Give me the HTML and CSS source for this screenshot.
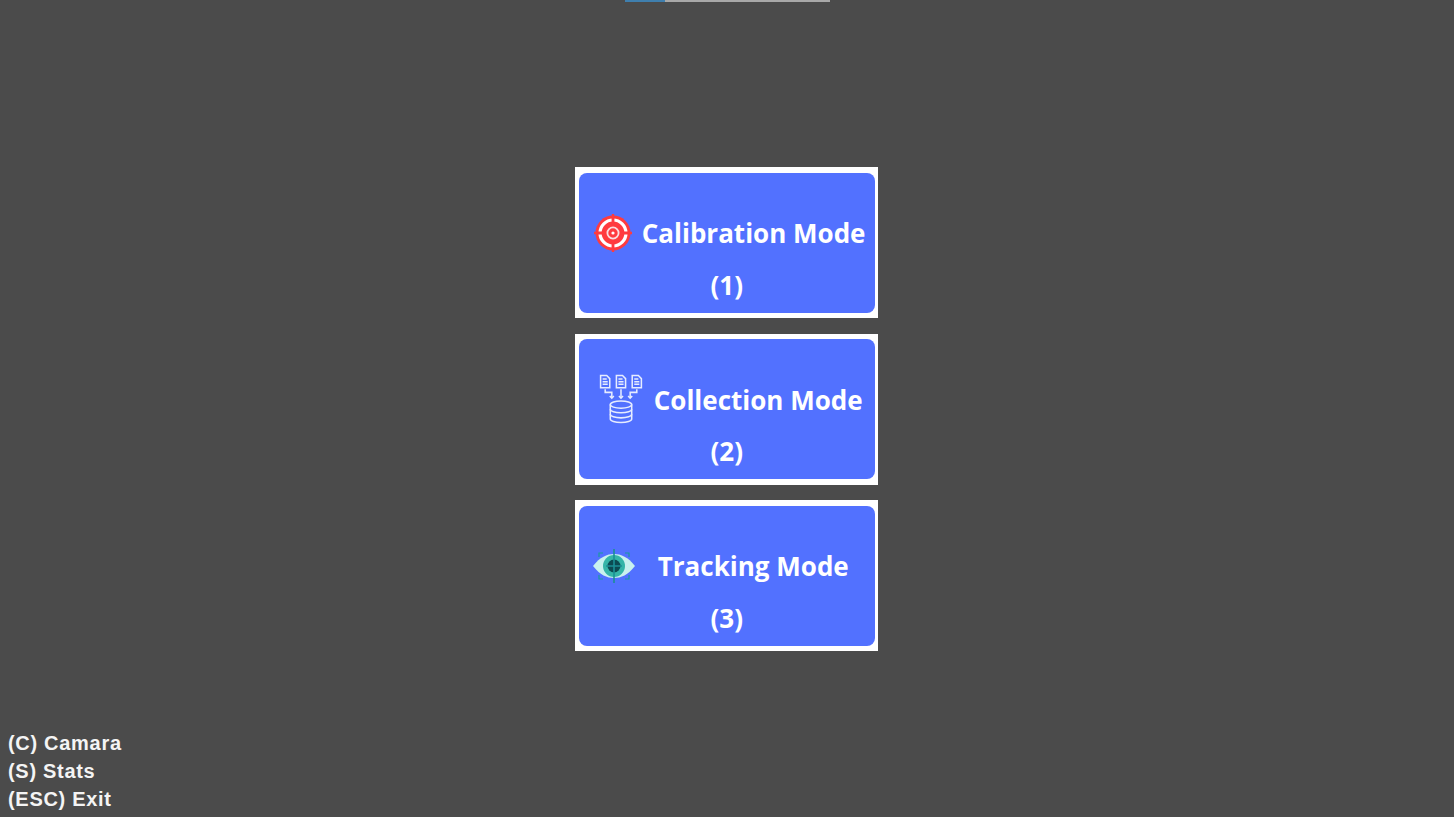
FILE: index.html
```html
<!DOCTYPE html>
<html lang="en">
<head>
<meta charset="UTF-8" />
<meta name="viewport" content="width=device-width, initial-scale=1" />
<title>Mode Menu</title>
<link rel="stylesheet" href="styles.css">
</head>
<body>
  <div class="top-strip">
    <span class="top-strip-blue"></span>
    <span class="top-strip-grey"></span>
  </div>

  <main class="menu">
    <button class="mode-btn mode-calibration">
      <span class="mode-face">
        <span class="mode-row">
          <svg class="mode-icon" viewBox="0 0 40 40" width="40" height="40" aria-hidden="true">
            <circle cx="20" cy="20" r="17.500" fill="#ff3b3f"/>
            <path d="M20 1v38M1 20h38" stroke="#ff3b3f" stroke-width="2.400"/>
            <circle cx="20" cy="20" r="13" fill="none" stroke="#fff" stroke-width="3.200"/>
            <path d="M20 5v8M20 27v8M5 20h8M27 20h8" stroke="#ff3b3f" stroke-width="2.800"/>
            <circle cx="20" cy="20" r="5.600" fill="none" stroke="#fbdde0" stroke-width="1.800"/>
            <circle cx="20" cy="20" r="1.600" fill="#fff"/>
          </svg>
          <span class="mode-label">Calibration Mode</span>
        </span>
        <span class="mode-key">(1)</span>
      </span>
    </button>

    <button class="mode-btn mode-collection">
      <span class="mode-face">
        <span class="mode-row">
          <svg class="mode-icon" viewBox="0 0 46 50" width="47" height="51" aria-hidden="true">
            <g fill="none" stroke="#e6ecff" stroke-width="1.500">
              <path d="M2.500 1.500h6l3 3v9h-9z"/>
              <path d="M18 1.500h6l3 3v9h-9z"/>
              <path d="M33.500 1.500h6l3 3v9h-9z"/>
              <path d="M4.500 5h4M4.500 7.500h5M4.500 10h5M20 5h4M20 7.500h5M20 10h5M35.500 5h4M35.500 7.500h5M35.500 10h5"/>
              <path d="M7 15v3h6.500v5M22.500 15v8M38 15v3h-6.500v5"/>
              <path d="M11.500 21.500l2 2.200 2-2.200M20.500 21.500l2 2.200 2-2.200M29.500 21.500l2 2.200 2-2.200"/>
              <ellipse cx="22.500" cy="30" rx="10.500" ry="3.500"/>
              <path d="M12 30v14c0 2 4.700 3.500 10.500 3.500S33 46 33 44V30"/>
              <path d="M12 34.500c0 2 4.700 3.500 10.500 3.500S33 36.500 33 34.500M12 39.500c0 2 4.700 3.500 10.500 3.500S33 41.500 33 39.500"/>
            </g>
          </svg>
          <span class="mode-label">Collection Mode</span>
        </span>
        <span class="mode-key">(2)</span>
      </span>
    </button>

    <button class="mode-btn mode-tracking">
      <span class="mode-face">
        <span class="mode-row">
          <svg class="mode-icon" viewBox="0 0 44 36" width="44" height="36" aria-hidden="true">
            <path d="M1 18C8 9 15 6 22 6s14 3 21 12c-7 9-14 12-21 12S8 27 1 18z" fill="#c9f1ee"/>
            <circle cx="22" cy="18" r="11" fill="#35b5a8"/>
            <circle cx="22" cy="18" r="6.500" fill="#0c4a52"/>
            <path d="M22 1v34M14 18h16" stroke="#1b8f95" stroke-width="1.600"/>
            <path d="M7 9V5h4M33 5h4v4M7 27v4h4M33 31h4v-4" fill="none" stroke="#1b9aa0" stroke-width="1.200"/>
          </svg>
          <span class="mode-label">Tracking Mode</span>
        </span>
        <span class="mode-key">(3)</span>
      </span>
    </button>
  </main>

  <ul class="shortcuts">
    <li>(C) Camara</li>
    <li>(S) Stats</li>
    <li>(ESC) Exit</li>
  </ul>
</body>
</html>
```

FILE: styles.css
```css
/* Reset & base */
* {
  box-sizing: border-box;
}
html, body {
  height: 100%;
  margin: 0;
}
body {
  position: relative;
  overflow: hidden;
  background: #4b4b4b;
  color: #fff;
  font-family: "Open Sans", "Noto Sans", sans-serif;
}

/* Thin loading strip on the top edge */
.top-strip {
  display: flex;
  justify-content: center;
  height: 2px;
  padding-left: 1px;
}
.top-strip-blue {
  width: 40px;
  background: #3f7fae;
}
.top-strip-grey {
  width: 165px;
  background: #a8a8a8;
}

/* Mode buttons */
.menu {
  display: flex;
  flex-direction: column;
  align-items: center;
  gap: 15.5px;
  padding: 165px 1px 0 0;
}
.mode-btn {
  display: block;
  width: 302.500px;
  height: 151px;
  padding: 5.750px 3px 5.250px 3.500px;
  border: none;
  border-radius: 0;
  background: #fff;
  color: #fff;
  font-family: inherit;
  cursor: pointer;
}
.mode-face {
  display: flex;
  flex-direction: column;
  height: 100%;
  background: #5271ff;
  border-radius: 8px;
}
.mode-row {
  display: flex;
  align-items: center;
  flex: 1;
  padding: 34px 0 0 14px;
}
.mode-label {
  font-size: 26px;
  font-weight: 700;
  line-height: 36px;
  white-space: nowrap;
}
.mode-key {
  display: block;
  height: 53px;
  padding-top: 7px;
  font-size: 26px;
  font-weight: 700;
  line-height: 36px;
  text-align: center;
}
.mode-icon {
  flex: none;
}
.mode-calibration .mode-icon {
  margin-right: 9px;
}
.mode-collection .mode-icon {
  margin: 0 9px 0 5px;
}
.mode-tracking .mode-icon {
  margin: 0 22px 0 -1px;
}

/* Keyboard hints */
.shortcuts {
  position: absolute;
  left: 8px;
  bottom: 4px;
  margin: 0;
  padding: 0;
  list-style: none;
  font-family: "Liberation Sans", Arial, sans-serif;
  font-size: 20px;
  font-weight: 700;
  line-height: 28px;
  letter-spacing: 0.7px;
  color: #f4f4f4;
}
```
